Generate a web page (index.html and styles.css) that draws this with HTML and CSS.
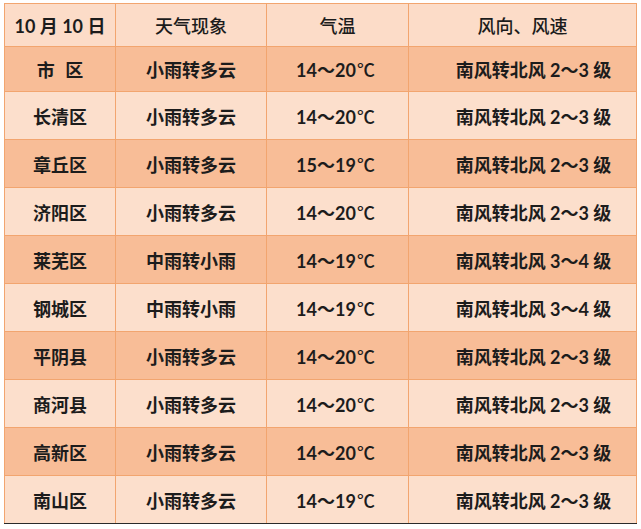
FILE: index.html
```html
<!DOCTYPE html>
<html lang="zh-CN">
<head>
<meta charset="utf-8">
<title>天气预报</title>
<link rel="stylesheet" href="styles.css">
</head>
<body>
<table class="weather">
  <colgroup>
    <col class="c1"><col class="c2"><col class="c3"><col class="c4">
  </colgroup>
  <thead>
    <tr class="head">
      <th class="date">10 月 10 日</th>
      <th>天气现象</th>
      <th>气温</th>
      <th>风向、风速</th>
    </tr>
  </thead>
  <tbody>
    <tr class="dark first"><td class="spaced">市 区</td><td>小雨转多云</td><td class="num">14～20<span class="deg">℃</span></td><td class="wind">南风转北风 2～3 级</td></tr>
    <tr class="light"><td>长清区</td><td>小雨转多云</td><td class="num">14～20<span class="deg">℃</span></td><td class="wind">南风转北风 2～3 级</td></tr>
    <tr class="dark"><td>章丘区</td><td>小雨转多云</td><td class="num">15～19<span class="deg">℃</span></td><td class="wind">南风转北风 2～3 级</td></tr>
    <tr class="light"><td>济阳区</td><td>小雨转多云</td><td class="num">14～20<span class="deg">℃</span></td><td class="wind">南风转北风 2～3 级</td></tr>
    <tr class="dark"><td>莱芜区</td><td>中雨转小雨</td><td class="num">14～19<span class="deg">℃</span></td><td class="wind">南风转北风 3～4 级</td></tr>
    <tr class="light"><td>钢城区</td><td>中雨转小雨</td><td class="num">14～19<span class="deg">℃</span></td><td class="wind">南风转北风 3～4 级</td></tr>
    <tr class="dark"><td>平阴县</td><td>小雨转多云</td><td class="num">14～20<span class="deg">℃</span></td><td class="wind">南风转北风 2～3 级</td></tr>
    <tr class="light"><td>商河县</td><td>小雨转多云</td><td class="num">14～20<span class="deg">℃</span></td><td class="wind">南风转北风 2～3 级</td></tr>
    <tr class="dark"><td>高新区</td><td>小雨转多云</td><td class="num">14～20<span class="deg">℃</span></td><td class="wind">南风转北风 2～3 级</td></tr>
    <tr class="light last"><td>南山区</td><td>小雨转多云</td><td class="num">14～19<span class="deg">℃</span></td><td class="wind">南风转北风 2～3 级</td></tr>
  </tbody>
</table>
</body>
</html>
```

FILE: styles.css
```css
html, body {
  margin: 0;
  padding: 0;
  background: #ffffff;
}

body {
  padding: 3px 0 0 4px;
}

.weather {
  border-collapse: collapse;
  table-layout: fixed;
  width: 632px;
  font-family: "Lato", "Noto Sans CJK SC", sans-serif;
  font-size: 18px;
  color: #1c1c1c;
  border-bottom: 1px solid #2a2a2a;
}

.c1 { width: 111px; }
.c2 { width: 151px; }
.c3 { width: 142px; }
.c4 { width: 228px; }

.weather th,
.weather td {
  border: 1px solid #f2a56f;
  text-align: center;
  vertical-align: middle;
  padding: 0;
  font-weight: 700;
  white-space: nowrap;
}

.weather th {
  font-weight: 500;
}

.weather th.date {
  font-weight: 700;
}

.head {
  height: 43px;
  background: #fcdcc8;
}

.weather tbody tr {
  height: 48px;
}

.weather tbody tr.first {
  height: 45px;
}

.dark {
  background: #f8bd97;
}

.light {
  background: #fcdfcc;
}

.weather tr.last td {
  border-bottom: 1px solid #2a2a2a;
}

.weather td.spaced {
  word-spacing: 6px;
}

.weather td.wind {
  padding-left: 22px;
}

.weather td.num {
  padding-right: 4px;
}

.deg {
  font-family: "Noto Sans CJK SC", sans-serif;
  font-weight: 500;
  margin-left: 1px;
}
```
